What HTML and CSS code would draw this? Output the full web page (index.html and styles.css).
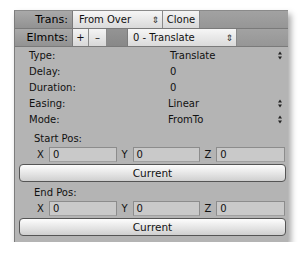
FILE: index.html
```html
<!DOCTYPE html>
<html>
<head>
<meta charset="utf-8">
<link rel="stylesheet" href="styles.css">
</head>
<body>
<div class="panel">
  <div class="hrow">
    <div class="hlabel">Trans:</div>
    <div class="popup pop1"><span>From Over</span><span class="updown">⇕</span></div>
    <div class="btn clone">Clone</div>
    <div class="hfill"></div>
  </div>
  <div class="hrow">
    <div class="hlabel">Elmnts:</div>
    <div class="btn small">+</div>
    <div class="btn small minus">–</div>
    <div class="darkbtn"></div>
    <div class="popup pop2"><span>0 - Translate</span><span class="updown">⇕</span></div>
    <div class="hfill"></div>
  </div>
  <div class="body">
    <div class="prop"><span class="pl">Type:</span><span class="pv">Translate</span><svg class="arr" width="4" height="9" viewBox="0 0 4 9"><path d="M2 0.5L4 3.5H0Z M2 8.5L4 5.5H0Z" fill="#222"/></svg></div>
    <div class="prop"><span class="pl">Delay:</span><span class="pv">0</span></div>
    <div class="prop"><span class="pl">Duration:</span><span class="pv">0</span></div>
    <div class="prop"><span class="pl">Easing:</span><span class="pv sh">Linear</span><svg class="arr" width="4" height="9" viewBox="0 0 4 9"><path d="M2 0.5L4 3.5H0Z M2 8.5L4 5.5H0Z" fill="#222"/></svg></div>
    <div class="prop"><span class="pl">Mode:</span><span class="pv sh">FromTo</span><svg class="arr" width="4" height="9" viewBox="0 0 4 9"><path d="M2 0.5L4 3.5H0Z M2 8.5L4 5.5H0Z" fill="#222"/></svg></div>
    <div class="sec first">Start Pos:</div>
    <div class="xyz">
      <span class="ax">X</span><div class="field">0</div>
      <span class="ax">Y</span><div class="field">0</div>
      <span class="ax">Z</span><div class="field">0</div>
    </div>
    <div class="current">Current</div>
    <div class="sec">End Pos:</div>
    <div class="xyz">
      <span class="ax">X</span><div class="field">0</div>
      <span class="ax">Y</span><div class="field">0</div>
      <span class="ax">Z</span><div class="field">0</div>
    </div>
    <div class="current">Current</div>
  </div>
</div>
</body>
</html>
```
FILE: styles.css
```css
html, body { margin: 0; padding: 0; background: #ffffff; }
body { font-family: "DejaVu Sans", sans-serif; font-size: 10px; color: #111; }
.panel {
  margin: 10px 0 0 14px;
  width: 274px;
  height: 232px;
  background: #b4b4b4;
  border-left: 1px solid #7c7c7c;
  border-top: 1px solid #8a8a8a;
  box-shadow: 3px 4px 6px rgba(0,0,0,0.35);
  box-sizing: border-box;
}
.hrow {
  display: flex;
  height: 18px;
  border-bottom: 1px solid #7a7a7a;
  box-sizing: border-box;
}
.hlabel {
  width: 58px;
  text-align: right;
  padding-right: 4px;
  box-sizing: border-box;
  font-size: 11px;
  line-height: 17px;
  color: #000;
  background: linear-gradient(#a9a9a9, #929292);
  border-right: 1px solid #7a7a7a;
}
.popup {
  display: flex;
  justify-content: space-between;
  align-items: center;
  padding: 0 3px 0 6px;
  box-sizing: border-box;
  background: linear-gradient(#f6f6f6, #dadada);
  border-right: 1px solid #8a8a8a;
}
.pop1 { width: 90px; }
.pop2 { width: 109px; padding-left: 5px; }
.updown { font-size: 9px; color: #333; }
.btn {
  display: flex;
  align-items: center;
  justify-content: center;
  background: linear-gradient(#f4f4f4, #d8d8d8);
  border-right: 1px solid #8a8a8a;
  box-sizing: border-box;
}
.clone { width: 37px; }
.small { width: 16px; }
.minus { width: 18px; }
.darkbtn {
  width: 21px;
  background: linear-gradient(#949494, #888888);
  border-right: 1px solid #7c7c7c;
  box-sizing: border-box;
}
.hfill { flex: 1; background: linear-gradient(#a2a2a2, #969696); }
.body { padding: 0 3px; }
.prop {
  display: flex;
  align-items: center;
  height: 16px;
}
.pl { width: 142px; padding-left: 11px; box-sizing: border-box; }
.pv { flex: 1; padding-left: 10px; }
.pv.sh { padding-left: 8px; }
.arr { margin-right: 3px; flex: none; }
.sec { padding-left: 16px; height: 15px; line-height: 15px; margin-top: 3px; }
.sec.first { margin-top: 4px; }
.xyz { display: flex; align-items: center; height: 17px; }
.ax { width: 14px; text-align: right; padding-right: 5px; box-sizing: border-box; margin-left: 2px; }
.xyz .ax:first-child { width: 31px; margin-left: 0; }
.field {
  width: 68px;
  height: 15px;
  line-height: 14px;
  box-sizing: border-box;
  background: #c9c9c9;
  border: 1px solid #8c8c8c;
  border-bottom-color: #a0a0a0;
  padding-left: 3px;
}
.xyz .field:last-child { width: 69px; }
.current {
  margin: 1px 0 0 1px;
  width: 267px;
  height: 18px;
  box-sizing: border-box;
  border: 1px solid #555;
  border-radius: 4px;
  background: linear-gradient(#fdfdfd, #e2e2e2 60%, #cfcfcf);
  text-align: center;
  line-height: 16px;
  font-size: 10.5px;
}
```
